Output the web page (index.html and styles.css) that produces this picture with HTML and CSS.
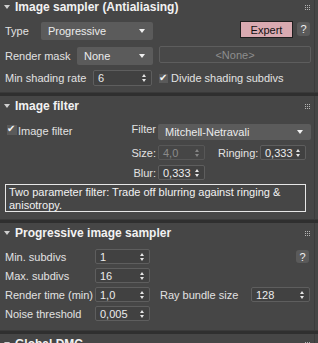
FILE: index.html
```html
<!DOCTYPE html>
<html>
<head>
<meta charset="utf-8">
<title>Render setup</title>
<link rel="stylesheet" href="styles.css">
</head>
<body>
<div class="panel first">
	<div class="head"><span class="tri"></span>Image sampler (Antialiasing)<span class="grip"></span></div>
	<div class="row r-type">
		<span class="lbl w36">Type</span>
		<div class="drop w112">Progressive<i class="caret"></i></div>
		<span class="btn expert">Expert</span>
		<span class="btn help">?</span>
	</div>
	<div class="row r-mask">
		<span class="lbl w72">Render mask</span>
		<div class="drop w76">None<i class="caret"></i></div>
		<div class="none-field">&lt;None&gt;</div>
	</div>
	<div class="row r-rate">
		<span class="lbl w88">Min shading rate</span>
		<div class="spin w59">6<i class="ud"></i></div>
		<span class="chk on c-divide"></span>
		<span class="chk-lbl">Divide shading subdivs</span>
	</div>
</div>
<div class="sep"></div>

<div class="panel filter">
	<div class="head"><span class="tri"></span>Image filter<span class="grip"></span></div>
	<div class="row r-filter">
		<div class="left">
			<span class="chk on c-filter"></span>
			<span class="chk-lbl">Image filter</span>
			<span class="rlbl">Filter</span>
		</div>
		<div class="drop w153">Mitchell-Netravali<i class="caret"></i></div>
	</div>
	<div class="row r-size">
		<div class="left"><span class="rlbl">Size:</span></div>
		<div class="spin w47 off">4,0<i class="ud"></i></div>
		<span class="lbl ringing">Ringing:</span>
		<div class="spin w46">0,333<i class="ud"></i></div>
	</div>
	<div class="row r-blur">
		<div class="left"><span class="rlbl">Blur:</span></div>
		<div class="spin w47">0,333<i class="ud"></i></div>
	</div>
	<div class="desc">Two parameter filter: Trade off blurring against ringing &amp; anisotropy.</div>
</div>
<div class="sep"></div>

<div class="panel prog">
	<div class="head"><span class="tri"></span>Progressive image sampler<span class="grip"></span></div>
	<div class="row r-p first-row">
		<span class="lbl w90">Min. subdivs</span>
		<div class="spin w55">1<i class="ud"></i></div>
		<span class="btn help small">?</span>
	</div>
	<div class="row r-p">
		<span class="lbl w90">Max. subdivs</span>
		<div class="spin w55">16<i class="ud"></i></div>
	</div>
	<div class="row r-p">
		<span class="lbl w90">Render time (min)</span>
		<div class="spin w55">1,0<i class="ud"></i></div>
		<span class="lbl ray">Ray bundle size</span>
		<div class="spin w59">128<i class="ud"></i></div>
	</div>
	<div class="row r-p">
		<span class="lbl w90">Noise threshold</span>
		<div class="spin w55">0,005<i class="ud"></i></div>
	</div>
</div>
<div class="sep"></div>

<div class="panel">
	<div class="head"><span class="tri"></span>Global DMC<span class="grip"></span></div>
</div>
</body>
</html>
```

FILE: styles.css
```css
body{margin: 0;background-color: #464646;font: 11px "Liberation Sans", Arial, sans-serif;color: #e2e2e2;overflow: hidden;}
.panel{background-color: #464646;border-right: 1px solid #3c3c3c;width: 314px;}
.panel.first{margin-top: -3px;padding-bottom: 6px;}
.panel.filter{padding-bottom: 7px;}
.panel.prog{padding-bottom: 9px;}
.sep{height: 3px;background-color: #2f2f2f;border-top: 1px solid #3a3a3a;}

.head{height: 20px;display: flex;align-items: center;padding-left: 4px;font-weight: bold;font-size: 12px;color: #f2f2f2;}
.tri{width: 0;height: 0;border-left: 3px solid transparent;border-right: 3px solid transparent;border-top: 4px solid #cfcfcf;margin-right: 5px;}
/* 3x3 dotted grip */
.grip{margin-left: auto;margin-right: 8px;margin-top: -4px;width: 1px;height: 1px;background-color: #b4b4b4;
	box-shadow: 2px 0 #b4b4b4, 4px 0 #b4b4b4, 0 2px #b4b4b4, 2px 2px #b4b4b4, 4px 2px #b4b4b4, 0 4px #b4b4b4, 2px 4px #b4b4b4, 4px 4px #b4b4b4;}

.row{display: flex;align-items: center;padding-left: 5px;}
.lbl{flex: none;white-space: nowrap;}
.w36{width: 36px;}
.w72{width: 72px;}
.w88{width: 88px;}
.w90{width: 90px;}

.drop{position: relative;box-sizing: border-box;background-color: #5b5b5b;border-radius: 2px;padding-left: 7px;display: flex;align-items: center;color: #ececec;}
.caret{position: absolute;right: 8px;top: 50%;margin-top: -2px;width: 0;height: 0;border-left: 3px solid transparent;border-right: 3px solid transparent;border-top: 4px solid #f0f0f0;}
.w112{width: 112px;height: 18px;}
.w76{width: 76px;height: 18px;}
.w153{width: 153px;height: 16px;}

.spin{box-sizing: border-box;height: 100%;background-color: #414141;border: 1px solid #5e5e5e;border-radius: 2px;padding: 0 4px 0 4px;display: flex;align-items: center;justify-content: space-between;color: #ececec;}
.spin.off{background-color: #464646;border-color: #575757;color: #8a8a8a;}
.ud{position: relative;width: 5px;height: 8px;}
.ud:before,.ud:after{content: "";position: absolute;left: 0;width: 0;height: 0;border-left: 2.5px solid transparent;border-right: 2.5px solid transparent;}
.ud:before{top: 0;border-bottom: 3.5px solid #e6e6e6;}
.ud:after{bottom: 0;border-top: 3.5px solid #e6e6e6;}
.spin.off .ud:before{border-bottom-color: #858585;}
.spin.off .ud:after{border-top-color: #858585;}
.w59{width: 59px;}
.w47{width: 47px;}
.w46{width: 46px;}
.w55{width: 55px;}

.btn{box-sizing: border-box;display: flex;align-items: center;justify-content: center;}
.expert{align-self: flex-start;margin-left: 87px;width: 53px;height: 17px;background-color: #d9aab1;border: 1px solid #1e1e1e;color: #111;font-size: 11px;}
.help{align-self: flex-start;margin-left: 4px;margin-top: 1px;width: 13px;height: 14px;background-color: #5a5a5a;border-radius: 3px;color: #f0f0f0;}

.r-type{margin-top: 4px;height: 20px;}
.r-mask{margin-top: 5px;height: 19px;}
.none-field{box-sizing: border-box;margin-left: 6px;width: 152px;height: 17px;align-self: flex-start;border: 1px solid #5d5d5d;border-radius: 2px;background-color: #484848;color: #8e8e8e;display: flex;align-items: center;justify-content: center;}
.r-rate{margin-top: 5px;height: 16px;}

.chk{position: relative;flex: none;box-sizing: border-box;width: 10px;height: 10px;background-color: #5a5a5a;}
.chk.on:after{content: "\2714";position: absolute;left: 0;top: -2px;font-size: 10px;color: #f4f4f4;font-family: "DejaVu Sans", sans-serif;}
.c-divide{margin-left: 7px;width: 9px;height: 9px;}
.chk-lbl{margin-left: 3px;white-space: nowrap;}

.r-filter{margin-top: 8px;height: 16px;}
.left{width: 153px;height: 100%;display: flex;align-items: center;}
.c-filter{margin-left: 2px;margin-top: -4px;}
.r-filter .chk-lbl{margin-left: 1px;margin-top: -3px;}
.rlbl{margin-left: auto;margin-right: 2px;}
.r-filter .rlbl{margin-top: -7px;}
.r-size{margin-top: 5px;height: 15px;}
.ringing{margin-left: 13px;width: 42px;}
.r-blur{margin-top: 5px;height: 15px;}
.desc{box-sizing: border-box;margin: 4px 8px 0 5px;height: 28px;border: 1px solid #e6e6e6;padding: 1px 3px 0 3px;line-height: 13px;color: #f2f2f2;}

.r-p{margin-top: 4px;height: 15px;}
.r-p.first-row{margin-top: 6px;}
.help.small{margin-left: 146px;margin-top: 1px;height: 13px;}
.ray{margin-left: 10px;width: 91px;}
```
